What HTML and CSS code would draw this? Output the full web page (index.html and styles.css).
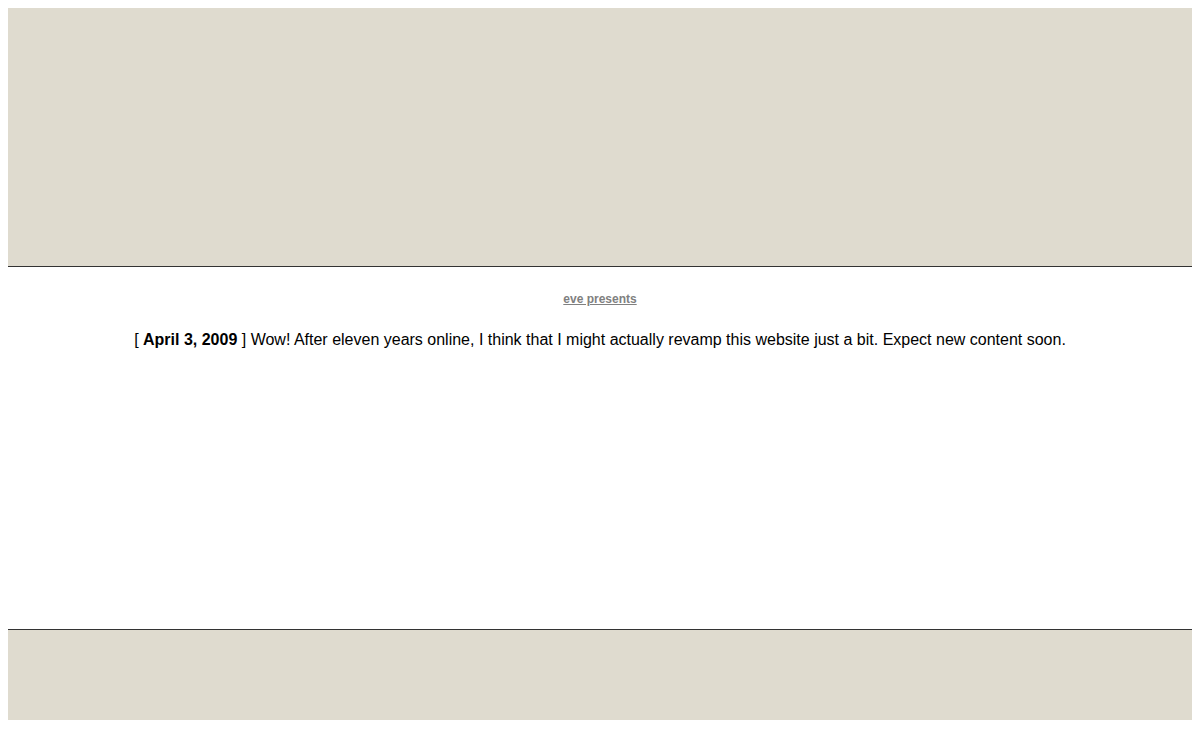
FILE: index.html
```html
<!doctype html>
<html>
<head>
  <meta content="text/html;charset=utf-8" http-equiv="Content-Type">
  <title>eve presents</title>
  <link rel="stylesheet" href="styles.css">
</head>
<body>
  <div class="banner top"></div>

  <div class="main">
    <p class="presents"><a href="#">eve presents</a></p>
    <p class="news">
    [ <b>April 3, 2009</b> ] Wow! After eleven years online, I think that I might
    actually revamp this website just a bit. Expect new content soon.
    </p>
  </div>

  <div class="banner bottom"></div>
</body>
</html>
```
FILE: styles.css
```css
body {
  margin: 8px;
  background-color: #fff;
  color: #000;
  font-family: "Liberation Sans", Arial, sans-serif;
}
.banner {
  background-color: #dfdbcf;
}
.top {
  height: 258px;
  border-bottom: 1px solid #333;
}
.bottom {
  height: 90px;
  border-top: 1px solid #333;
}
.main {
  height: 337px;
  padding-top: 25px;
  text-align: center;
}
.presents {
  margin: 0;
  font-size: 12px;
  line-height: 14px;
  font-weight: bold;
}
.presents a { color: #808080; }
.news {
  margin: 25px 0 0 0;
  font-size: 16px;
  line-height: 18px;
}
```
